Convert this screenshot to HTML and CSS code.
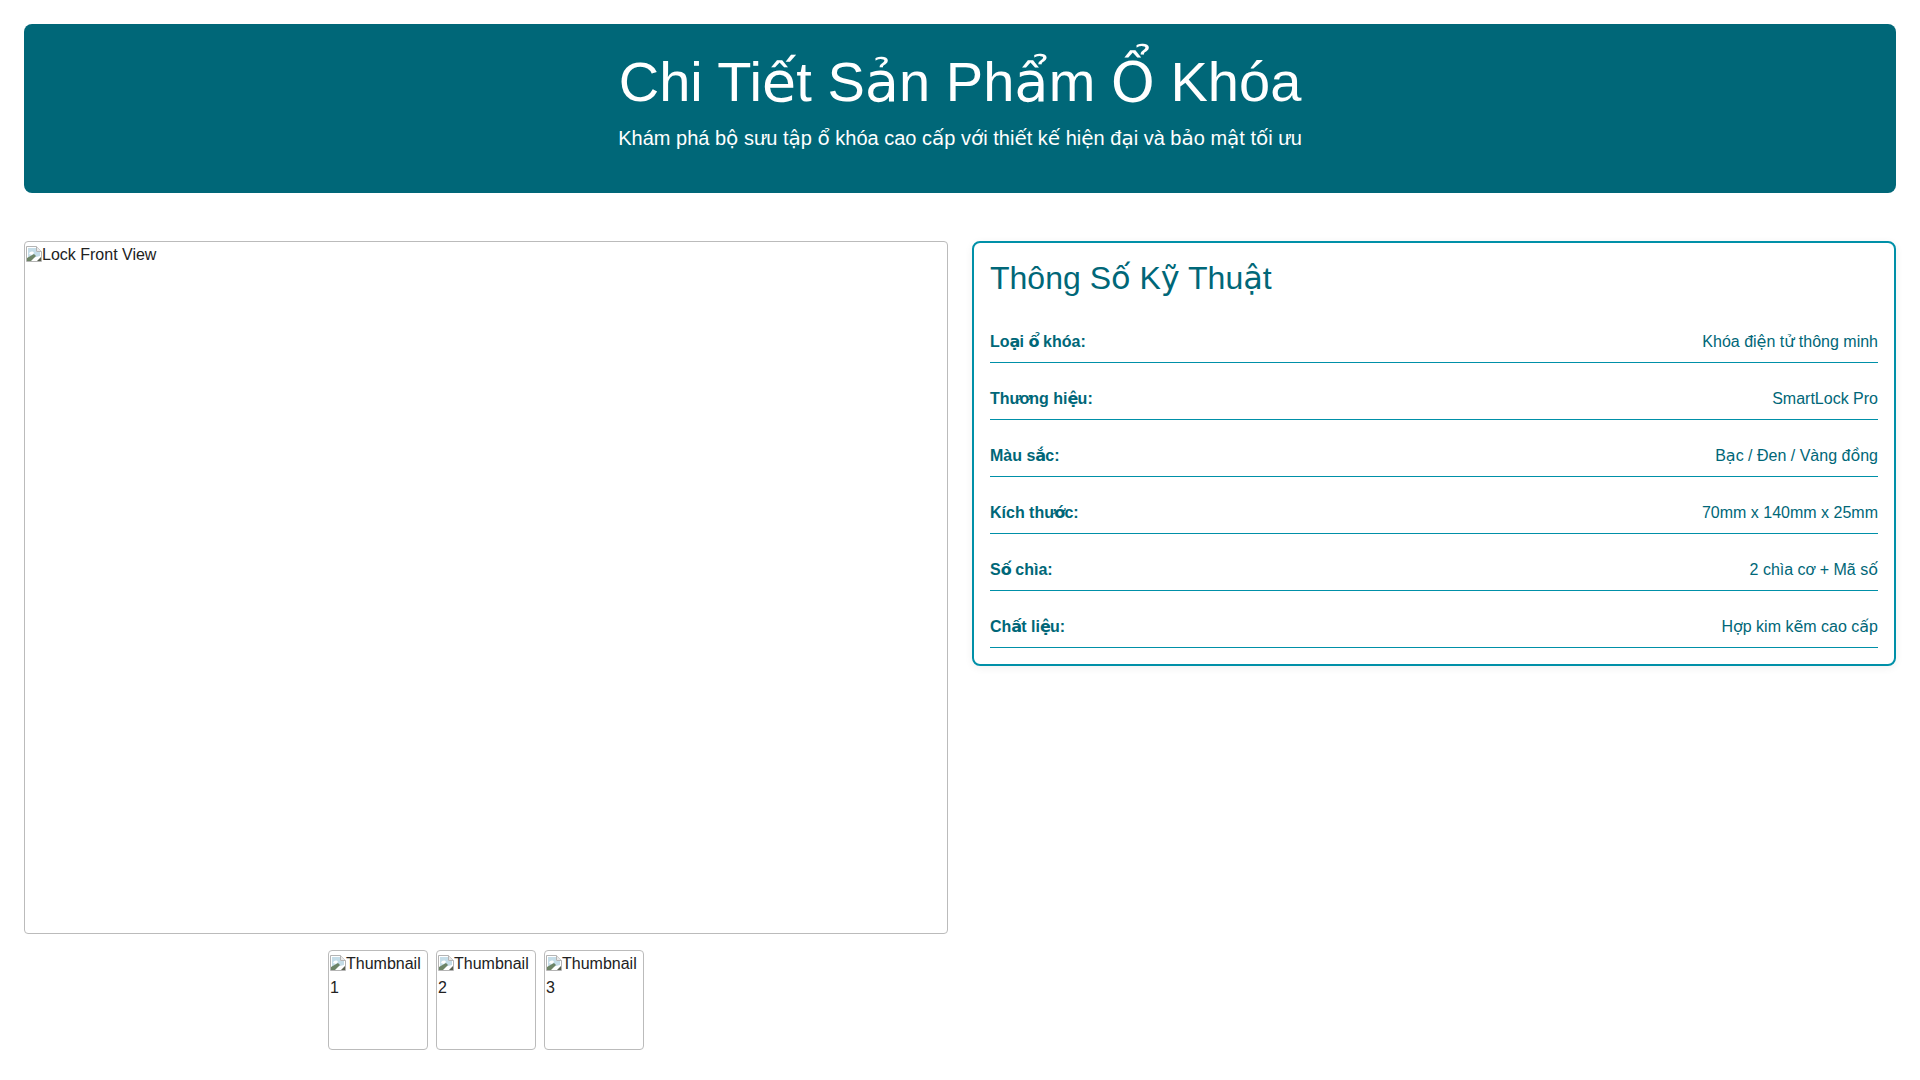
FILE: index.html
```html
<!DOCTYPE html>
<html>
<head>
<meta charset="utf-8">
<title>Chi Tiết Sản Phẩm Ổ Khóa</title>
<link rel="stylesheet" href="styles.css">
</head>
<body>
<svg class="defs" width="0" height="0" aria-hidden="true">
  <symbol id="broken" viewBox="0 0 16 16">
    <path d="M0.5 0.5H10.5L15.5 5.5V15.5H0.5Z" fill="#fff" stroke="#b4b4b4"/>
    <path d="M10.5 0.5V5.5H15.5" fill="#e8e8e8" stroke="#b4b4b4"/>
    <path d="M2 2H10V6H14V10L2 13Z" fill="#c5dde8"/>
    <path d="M3 8C4 5 7 5 8 7L6 9Z" fill="#fff"/>
    <path d="M1 15V12L8 8L10 10L5 15Z" fill="#6d8466"/>
    <path d="M11 15L15 11V15Z" fill="#59604f"/>
  </symbol>
</svg>
<header class="hero">
  <h1>Chi Ti<span class="vn">ế</span>t S<span class="vn">ả</span>n Ph<span class="vn">ẩ</span>m <span class="vn">Ổ</span> Khóa</h1>
  <p>Khám phá b<span class="vn">ộ</span> s<span class="hn">ư</span>u t<span class="vn">ậ</span>p <span class="vn">ổ</span> khóa cao c<span class="vn">ấ</span>p v<span class="vn">ớ</span>i thi<span class="vn">ế</span>t k<span class="vn">ế</span> hi<span class="vn">ệ</span>n đ<span class="vn">ạ</span>i và b<span class="vn">ả</span>o m<span class="vn">ậ</span>t t<span class="vn">ố</span>i <span class="hn">ư</span>u</p>
</header>
<main class="layout">
  <section class="gallery">
    <div class="main-image"><svg class="broken"><use href="#broken"/></svg>Lock Front View</div>
    <div class="thumbs">
      <div class="thumb"><svg class="broken"><use href="#broken"/></svg>Thumbnail 1</div>
      <div class="thumb"><svg class="broken"><use href="#broken"/></svg>Thumbnail 2</div>
      <div class="thumb"><svg class="broken"><use href="#broken"/></svg>Thumbnail 3</div>
    </div>
  </section>
  <section class="specs">
    <h2>Thông S<span class="vn">ố</span> K<span class="vn">ỹ</span> Thu<span class="vn">ậ</span>t</h2>
    <div class="row"><span class="label">Lo<span class="vn">ạ</span>i <span class="vn">ổ</span> khóa:</span><span>Khóa đi<span class="vn">ệ</span>n t<span class="vn">ử</span> thông minh</span></div>
    <div class="row"><span class="label">Th<span class="hn">ư</span><span class="hn">ơ</span>ng hi<span class="vn">ệ</span>u:</span><span>SmartLock Pro</span></div>
    <div class="row"><span class="label">Màu s<span class="vn">ắ</span>c:</span><span>B<span class="vn">ạ</span>c / Đen / Vàng đ<span class="vn">ồ</span>ng</span></div>
    <div class="row"><span class="label">Kích th<span class="hn">ư</span><span class="vn">ớ</span>c:</span><span>70mm x 140mm x 25mm</span></div>
    <div class="row"><span class="label">S<span class="vn">ố</span> chìa:</span><span>2 chìa c<span class="hn">ơ</span> + Mã s<span class="vn">ố</span></span></div>
    <div class="row"><span class="label">Ch<span class="vn">ấ</span>t li<span class="vn">ệ</span>u:</span><span>H<span class="vn">ợ</span>p kim k<span class="vn">ẽ</span>m cao c<span class="vn">ấ</span>p</span></div>
  </section>
</main>
</body>
</html>
```
FILE: styles.css
```css
* { box-sizing: border-box; }
html, body { margin: 0; }
body {
  padding: 24px;
  background: #fff;
  color: #222;
  font-family: "Liberation Sans", Arial, sans-serif;
  font-size: 16px;
  line-height: 24px;
}
.defs { position: absolute; }
.vn {
  font-family: "DejaVu Sans", sans-serif;
  line-height: 1;
}
.hn {
  letter-spacing: -0.05em;
  line-height: 1;
}
.hero {
  padding: 24px 24px 40px;
  margin-bottom: 48px;
  background: #006778;
  border-radius: 8px;
  color: #fff;
  text-align: center;
}
.hero h1 {
  margin: 0 0 7px;
  font-size: 56px;
  font-weight: 400;
  line-height: 68px;
}
.hero p {
  margin: 0;
  font-size: 20px;
  line-height: 30px;
}
.layout {
  display: grid;
  grid-template-columns: 1fr 1fr;
  gap: 24px;
  align-items: start;
}
.main-image {
  height: 693px;
  padding: 1px;
  border: 1px solid #bbb;
  border-radius: 4px;
}
.broken {
  display: inline-block;
  width: 16px;
  height: 16px;
  vertical-align: -2px;
}
.thumbs {
  display: flex;
  justify-content: center;
  gap: 8px;
  margin-top: 16px;
}
.thumb {
  width: 100px;
  height: 100px;
  padding: 1px;
  border: 1px solid #bbb;
  border-radius: 4px;
}
.specs {
  padding: 16px;
  border: 2px solid #0090a8;
  border-radius: 8px;
  box-shadow: 0 2px 8px rgba(0, 0, 0, 0.06);
  color: #006778;
}
.specs h2 {
  margin: 0 0 24px;
  font-size: 32px;
  font-weight: 400;
  line-height: 39px;
}
.row {
  display: flex;
  justify-content: space-between;
  padding: 8px 0;
  margin-top: 16px;
  border-bottom: 1px solid #0090a8;
}
.label { font-weight: 700; }
.label .vn { letter-spacing: -0.8px; }
.label .hn { letter-spacing: -0.1em; }
```
